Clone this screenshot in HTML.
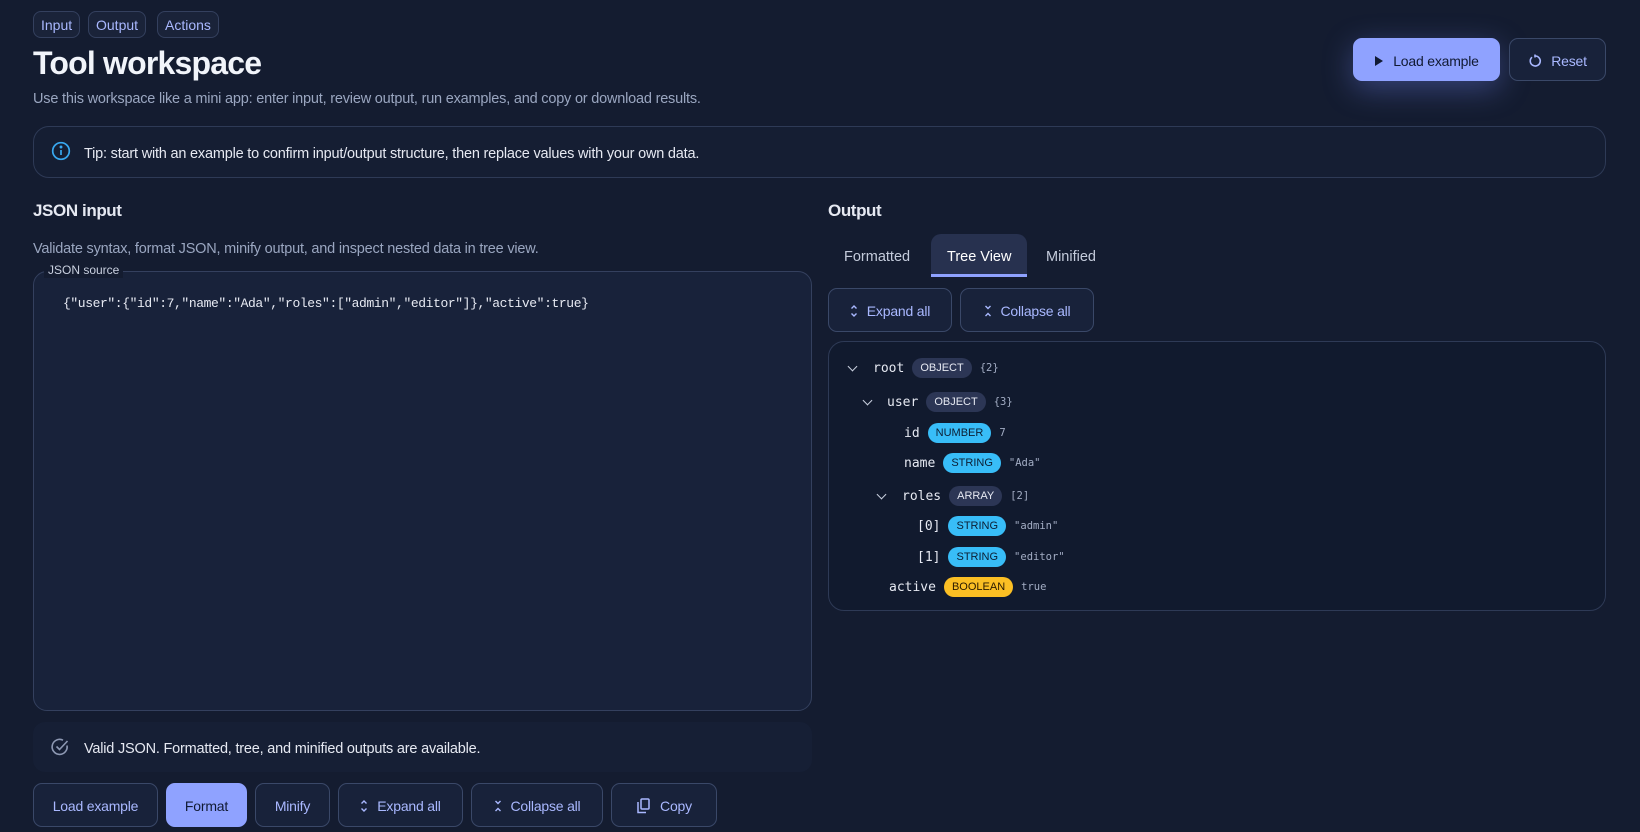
<!DOCTYPE html>
<html><head><meta charset="utf-8"><style>
*{box-sizing:border-box;margin:0;padding:0}
html,body{width:1640px;height:832px;overflow:hidden;background:#141c30;font-family:"Liberation Sans",sans-serif;color:#e6e9f2}
.a{position:absolute}
.tag{position:absolute;top:11px;height:27px;border:1px solid #34405e;border-radius:8px;background:#1a2339;color:#a9b8ff;font-size:14px;line-height:27px;padding:0 7px}
.btn{position:absolute;border:1px solid #3a4868;border-radius:9px;background:#18223a;color:#a9b8ff;font-size:14px;display:flex;align-items:center;justify-content:center;gap:9px;letter-spacing:-0.2px;padding-top:2px}
.pri{background:#8fa2ff;color:#111a33;border-color:#8fa2ff}
.mono{font-family:"Liberation Mono","DejaVu Sans Mono",monospace}
.row{position:absolute;height:22px;display:flex;align-items:center;font-size:13px}
.k{font-family:"DejaVu Sans Mono",monospace;font-size:13px;color:#e6e9f2}
.b{display:inline-block;height:20px;line-height:20px;border-radius:10px;padding:0 8px;font-size:11px;margin-left:8px;font-weight:500}
.bo{background:#2c3655;color:#e6e9f2}
.bs{background:#38bdf8;color:#0c1e33}
.by{background:#fbbf24;color:#2a1a00}
.v{font-family:"DejaVu Sans Mono",monospace;font-size:10.5px;color:#a3adc4;margin-left:8px}
.chev{position:absolute;width:7px;height:7px;border-right:1.6px solid #c9d0df;border-bottom:1.6px solid #c9d0df;transform:rotate(45deg)}
</style></head><body>
<div class="tag" style="left:33px">Input</div>
<div class="tag" style="left:88px">Output</div>
<div class="tag" style="left:157px">Actions</div>
<div class="a" style="left:33px;top:45px;font-size:32px;font-weight:bold;letter-spacing:-0.8px;color:#f1f4fa">Tool workspace</div>
<div class="a" style="left:33px;top:91px;font-size:14.5px;color:#9aa6c0;letter-spacing:-0.2px">Use this workspace like a mini app: enter input, review output, run examples, and copy or download results.</div>

<div class="btn pri" style="left:1353px;top:38px;width:147px;height:43px;box-shadow:0 8px 30px rgba(120,140,255,.35)"><svg width="10" height="12" viewBox="0 0 10 12"><path d="M1 1L9 6L1 11Z" fill="#111a33"/></svg>Load example</div>
<div class="btn" style="left:1509px;top:38px;width:97px;height:43px"><svg width="14" height="14" viewBox="0 0 14 14" fill="none" stroke="#a9b8ff" stroke-width="1.6"><path d="M4 3.2A5 5 0 1 0 7 2"/><path d="M7 .5V3.5"/></svg>Reset</div>

<div class="a" style="left:33px;top:126px;width:1573px;height:52px;border:1px solid #2e3a56;border-radius:16px;background:#151e33"></div>
<svg class="a" style="left:51px;top:141px" width="20" height="20" viewBox="0 0 20 20" fill="none" stroke="#38a8f0" stroke-width="1.7"><circle cx="10" cy="10" r="8.3"/><path d="M10 9v5"/><circle cx="10" cy="6" r=".6" fill="#38a8f0"/></svg>
<div class="a" style="left:84px;top:146px;font-size:14.5px;color:#e6e9f2;letter-spacing:-0.2px">Tip: start with an example to confirm input/output structure, then replace values with your own data.</div>

<div class="a" style="left:33px;top:201px;font-size:17px;font-weight:bold;letter-spacing:-0.4px">JSON input</div>
<div class="a" style="left:33px;top:241px;font-size:14.5px;color:#9aa6c0;letter-spacing:-0.2px">Validate syntax, format JSON, minify output, and inspect nested data in tree view.</div>
<div class="a" style="left:33px;top:271px;width:779px;height:440px;border:1px solid #34405e;border-radius:14px;background:#18223a"></div>
<div class="a" style="left:44px;top:262px;padding:0 4px;background:#141c30;font-size:12px;color:#c9d0df;line-height:16px">JSON source</div>
<div class="a mono" style="left:63px;top:296px;font-size:13px;color:#e6e9f2;letter-spacing:-0.4px">{"user":{"id":7,"name":"Ada","roles":["admin","editor"]},"active":true}</div>

<div class="a" style="left:33px;top:722px;width:779px;height:50px;border-radius:12px;background:#161f35"></div>
<svg class="a" style="left:50px;top:737px" width="20" height="20" viewBox="0 0 20 20" fill="none" stroke="#8d98b3" stroke-width="1.6"><path d="M17 8.5A7.5 7.5 0 1 1 13 3.2"/><path d="M6.5 9.5l3 3L17.5 4"/></svg>
<div class="a" style="left:84px;top:741px;font-size:14.5px;color:#e6e9f2;letter-spacing:-0.2px">Valid JSON. Formatted, tree, and minified outputs are available.</div>

<div class="btn" style="left:33px;top:783px;width:125px;height:44px">Load example</div>
<div class="btn pri" style="left:166px;top:783px;width:81px;height:44px">Format</div>
<div class="btn" style="left:255px;top:783px;width:75px;height:44px">Minify</div>
<div class="btn" style="left:338px;top:783px;width:125px;height:44px"><svg width="8" height="14" viewBox="0 0 8 14" fill="none" stroke="#a9b8ff" stroke-width="1.4"><path d="M1.5 4.5L4 2l2.5 2.5M1.5 9.5L4 12l2.5-2.5"/></svg>Expand all</div>
<div class="btn" style="left:471px;top:783px;width:132px;height:44px"><svg width="8" height="14" viewBox="0 0 8 14" fill="none" stroke="#a9b8ff" stroke-width="1.4"><path d="M1.5 2L4 4.5 6.5 2M1.5 12L4 9.5l2.5 2.5"/></svg>Collapse all</div>
<div class="btn" style="left:611px;top:783px;width:106px;height:44px"><svg width="15" height="16" viewBox="0 0 15 16" fill="none" stroke="#a9b8ff" stroke-width="1.5"><rect x="5" y="1" width="8" height="10" rx="1"/><path d="M2 4v10.5h8"/></svg>Copy</div>

<div class="a" style="left:828px;top:201px;font-size:17px;font-weight:bold;letter-spacing:-0.4px">Output</div>
<div class="a" style="left:844px;top:249px;font-size:14.5px;color:#c4cbdb">Formatted</div>
<div class="a" style="left:931px;top:234px;width:96px;height:43px;border-radius:10px 10px 0 0;background:#27314f;border-bottom:3px solid #8fa2ff"></div>
<div class="a" style="left:947px;top:249px;font-size:14.5px;color:#fff">Tree View</div>
<div class="a" style="left:1046px;top:249px;font-size:14.5px;color:#c4cbdb">Minified</div>
<div class="btn" style="left:828px;top:288px;width:124px;height:44px"><svg width="8" height="14" viewBox="0 0 8 14" fill="none" stroke="#a9b8ff" stroke-width="1.4"><path d="M1.5 4.5L4 2l2.5 2.5M1.5 9.5L4 12l2.5-2.5"/></svg>Expand all</div>
<div class="btn" style="left:960px;top:288px;width:134px;height:44px"><svg width="8" height="14" viewBox="0 0 8 14" fill="none" stroke="#a9b8ff" stroke-width="1.4"><path d="M1.5 2L4 4.5 6.5 2M1.5 12L4 9.5l2.5 2.5"/></svg>Collapse all</div>

<div class="a" style="left:828px;top:341px;width:778px;height:270px;border:1px solid #2e3a56;border-radius:16px;background:#111a2e"></div>
<div class="chev" style="left:849px;top:363px"></div>
<div class="row" style="left:873px;top:357px"><span class="k">root</span><span class="b bo">OBJECT</span><span class="v">{2}</span></div>
<div class="chev" style="left:864px;top:397px"></div>
<div class="row" style="left:887px;top:391px"><span class="k">user</span><span class="b bo">OBJECT</span><span class="v">{3}</span></div>
<div class="row" style="left:904px;top:422px"><span class="k">id</span><span class="b bs">NUMBER</span><span class="v">7</span></div>
<div class="row" style="left:904px;top:452px"><span class="k">name</span><span class="b bs">STRING</span><span class="v">"Ada"</span></div>
<div class="chev" style="left:878px;top:491px"></div>
<div class="row" style="left:902px;top:485px"><span class="k">roles</span><span class="b bo">ARRAY</span><span class="v">[2]</span></div>
<div class="row" style="left:917px;top:515px"><span class="k">[0]</span><span class="b bs">STRING</span><span class="v">"admin"</span></div>
<div class="row" style="left:917px;top:546px"><span class="k">[1]</span><span class="b bs">STRING</span><span class="v">"editor"</span></div>
<div class="row" style="left:889px;top:576px"><span class="k">active</span><span class="b by">BOOLEAN</span><span class="v">true</span></div>
</body></html>
